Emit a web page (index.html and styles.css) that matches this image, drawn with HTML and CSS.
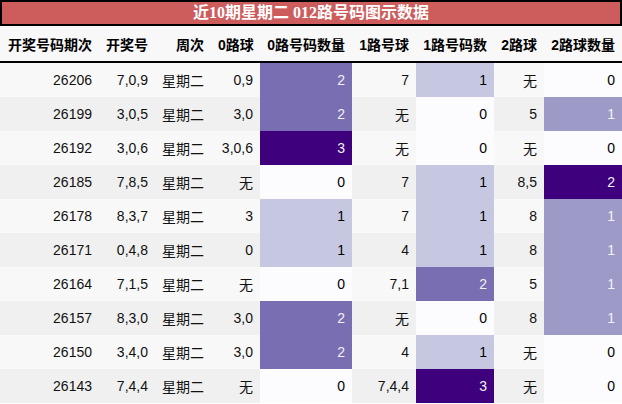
FILE: index.html
```html
<!DOCTYPE html>
<html lang="zh">
<head>
<meta charset="utf-8">
<link rel="stylesheet" href="styles.css">
</head>
<body>
<table class="data">
  <caption class="title">近10期星期二 012路号码图示数据</caption>
  <colgroup>
    <col class="c1"><col class="c2"><col class="c3"><col class="c4"><col class="c5"><col class="c6"><col class="c7"><col class="c8"><col class="c9">
  </colgroup>
  <thead>
    <tr><th>开奖号码期次</th><th>开奖号</th><th>周次</th><th>0路球</th><th>0路号码数量</th><th>1路号球</th><th>1路号码数</th><th>2路球</th><th>2路球数量</th></tr>
  </thead>
  <tbody>
    <tr><td>26206</td><td>7,0,9</td><td>星期二</td><td>0,9</td><td class="g2">2</td><td>7</td><td class="g1">1</td><td>无</td><td class="h0">0</td></tr>
    <tr><td>26199</td><td>3,0,5</td><td>星期二</td><td>3,0</td><td class="g2">2</td><td>无</td><td class="g0">0</td><td>5</td><td class="h1">1</td></tr>
    <tr><td>26192</td><td>3,0,6</td><td>星期二</td><td>3,0,6</td><td class="g3">3</td><td>无</td><td class="g0">0</td><td>无</td><td class="h0">0</td></tr>
    <tr><td>26185</td><td>7,8,5</td><td>星期二</td><td>无</td><td class="g0">0</td><td>7</td><td class="g1">1</td><td>8,5</td><td class="h2">2</td></tr>
    <tr><td>26178</td><td>8,3,7</td><td>星期二</td><td>3</td><td class="g1">1</td><td>7</td><td class="g1">1</td><td>8</td><td class="h1">1</td></tr>
    <tr><td>26171</td><td>0,4,8</td><td>星期二</td><td>0</td><td class="g1">1</td><td>4</td><td class="g1">1</td><td>8</td><td class="h1">1</td></tr>
    <tr><td>26164</td><td>7,1,5</td><td>星期二</td><td>无</td><td class="g0">0</td><td>7,1</td><td class="g2">2</td><td>5</td><td class="h1">1</td></tr>
    <tr><td>26157</td><td>8,3,0</td><td>星期二</td><td>3,0</td><td class="g2">2</td><td>无</td><td class="g0">0</td><td>8</td><td class="h1">1</td></tr>
    <tr><td>26150</td><td>3,4,0</td><td>星期二</td><td>3,0</td><td class="g2">2</td><td>4</td><td class="g1">1</td><td>无</td><td class="h0">0</td></tr>
    <tr><td>26143</td><td>7,4,4</td><td>星期二</td><td>无</td><td class="g0">0</td><td>7,4,4</td><td class="g3">3</td><td>无</td><td class="h0">0</td></tr>
  </tbody>
</table>
</body>
</html>
```
FILE: styles.css
```css
html, body {
  margin: 0;
  padding: 0;
  background: #ffffff;
}

.data {
  width: 622px;
  border-collapse: collapse;
  table-layout: fixed;
  font-family: "Liberation Sans", "Noto Sans CJK SC", sans-serif;
  font-size: 14px;
  color: #111111;
}

.c1 { width: 99px; }
.c2 { width: 56px; }
.c3 { width: 56px; }
.c4 { width: 49px; }
.c5 { width: 92px; }
.c6 { width: 64px; }
.c7 { width: 78px; }
.c8 { width: 50px; }
.c9 { width: 78px; }

.title {
  box-sizing: border-box;
  height: 26px;
  border: 2px solid #000000;
  background: #cd5c5c;
  color: #ffffff;
  font-family: "Liberation Serif", "Noto Sans CJK SC", serif;
  font-weight: bold;
  font-size: 16px;
  line-height: 22px;
  text-align: center;
  white-space: nowrap;
}

.data th {
  height: 35px;
  padding: 0 7px;
  text-align: right;
  font-weight: bold;
  background: #f8f8f8;
  color: #000000;
  border-bottom: 2px solid #000000;
  white-space: nowrap;
}

.data td {
  height: 34px;
  padding: 0 7px;
  text-align: right;
  white-space: nowrap;
}

.data tbody tr:nth-child(odd) td { background: #f8f8f8; }
.data tbody tr:nth-child(even) td { background: #f0f0f0; }

.data tbody tr td.g0, .data tbody tr td.h0 { background: #fcfbfd; color: #000000; }
.data tbody tr td.g1 { background: #c6c7e1; color: #000000; }
.data tbody tr td.g2 { background: #796eb2; color: #f1f1f1; }
.data tbody tr td.g3, .data tbody tr td.h2 { background: #3f007d; color: #f1f1f1; }
.data tbody tr td.h1 { background: #9e9ac8; color: #f1f1f1; }
```
